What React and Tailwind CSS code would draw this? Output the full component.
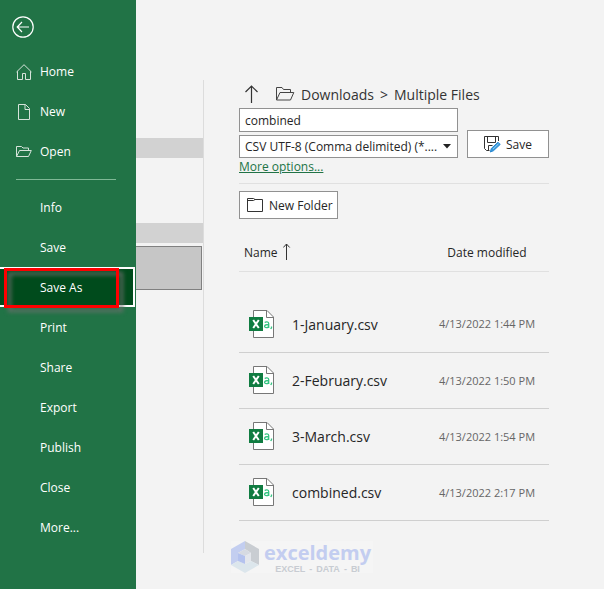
import React from "react";

const topItems = [
  { label: "Home", icon: HomeIcon },
  { label: "New", icon: PageIcon },
  { label: "Open", icon: OpenIcon },
];

const items = ["Info", "Save", "Save As", "Print", "Share", "Export", "Publish", "Close", "More..."];

const files = [
  { name: "1-January.csv", date: "4/13/2022 1:44 PM" },
  { name: "2-February.csv", date: "4/13/2022 1:50 PM" },
  { name: "3-March.csv", date: "4/13/2022 1:54 PM" },
  { name: "combined.csv", date: "4/13/2022 2:17 PM" },
];

function BackIcon() {
  return (
    <svg width="22" height="22" viewBox="0 0 22 22" fill="none" stroke="#fff" aria-hidden="true">
      <circle cx="11" cy="11" r="10.2" strokeWidth="1.2" />
      <path d="M5.5 11H17M10 6l-4.8 5 4.8 5" strokeWidth="1.2" />
    </svg>
  );
}

function HomeIcon() {
  return (
    <svg width="16" height="16" viewBox="0 0 16 16" fill="none" stroke="#d6e3da" aria-hidden="true">
      <path d="M.5 8 8 .7 15.5 8M1.500 7.200V15.500H6.500V9.500H9.500V15.500H14.500V7.200" />
    </svg>
  );
}

function PageIcon() {
  return (
    <svg width="16" height="16" viewBox="0 0 16 16" fill="none" stroke="#d6e3da" aria-hidden="true">
      <path d="M2.500.500H9.500L13.500 4.500V15.500H2.500ZM9 .500V5.500H13.500" />
    </svg>
  );
}

function OpenIcon() {
  return (
    <svg width="16" height="16" viewBox="0 0 16 16" fill="none" stroke="#d6e3da" aria-hidden="true">
      <path d="M.500 12.500V2.500H5.500L7 4H12.500V6.500M.500 12.500 3.500 6.500H15.300L12.500 12.500Z" />
    </svg>
  );
}

function FolderOpenIcon() {
  return (
    <svg width="20" height="16" viewBox="0 0 20 16" fill="none" stroke="#444" aria-hidden="true">
      <path d="M1.500 14V1.500H7L8.500 3.500H15.500V6.500M1.500 14 5 6.500H18.800L15.500 14Z" />
    </svg>
  );
}

function UpArrow() {
  return (
    <svg width="14" height="18" viewBox="0 0 14 18" fill="none" stroke="#333" aria-hidden="true">
      <path d="M6.500 1V18M.5 7 6.500 1l6 6" strokeWidth="1.200" />
    </svg>
  );
}

function SortArrow() {
  return (
    <svg width="8" height="18" viewBox="0 0 8 18" fill="none" stroke="#333" aria-hidden="true">
      <path d="M3.500 1V17M.300 4.500 3.500 1l3.200 3.500" />
    </svg>
  );
}

function NewFolderIcon() {
  return (
    <svg width="16" height="14" viewBox="0 0 16 14" fill="none" stroke="#333" aria-hidden="true">
      <path d="M.500 13.500V.500H6.500L8 1.500H15.500V13.500ZM.500 2.500H6.500L8 1.500" />
    </svg>
  );
}

function SaveIcon() {
  return (
    <svg width="17" height="17" viewBox="0 0 17 17" fill="none" stroke="#333" aria-hidden="true">
      <path d="M5.500 14.500H2.500L.500 12.500V.500H14.500V5M3.500.500V6.500H11.500V.500M4.500 14.500V9.500H8.500" />
      <path d="m6.300 16 1-3.500 6.700-6.300 2.200 2.200-6.700 6.300Z" fill="#3a9bdc" stroke="#2b88d0" />
      <path d="m9 13 5.500-5.200" stroke="#a8d4f2" strokeWidth=".8" />
    </svg>
  );
}

function CsvIcon() {
  return (
    <svg width="26" height="28" viewBox="0 0 26 28" fill="none" aria-hidden="true">
      <path d="M4.500.500H18L24.500 7V27.500H4.500Z" fill="#fff" stroke="#777" />
      <path d="M17.500.500V7.500H24.500" stroke="#777" />
      <rect y="7" width="14" height="14" fill="#107c41" />
      <path d="m4.200 10 5.600 8M9.800 10l-5.600 8" stroke="#fff" strokeWidth="2" />
      <path d="M15.700 12.500c1-.8 4-1 4 1V18M19.700 14.500c-5-.2-5 3.200-2.300 3.200 1.300 0 2.300-.8 2.300-2M22.500 16.500v1.300l-.8 1.200" stroke="#33c481" strokeWidth="1.300" />
    </svg>
  );
}

function Watermark() {
  return (
    <div className="flex h-8 w-[142px] items-center gap-[5px] bg-[#f5f5f5]">
      <svg className="shrink-0" width="28" height="32" viewBox="0 0 28 32" aria-hidden="true">
        <path d="M14 0 0 8V24L7 20V12L14 8Z" fill="#c3cef0" />
        <path d="M14 0 28 8V24L20 20V12L14 8Z" fill="#c9cdd2" />
        <path d="M0 24 14 32 28 24 20 20 14 23 7 20Z" fill="#dce6ec" />
        <path d="m7 12 7-4 6 4-6 3Z" fill="#d6dae2" />
        <path d="M7 12 14 15V23L7 20Z" fill="#b4c2ee" />
        <path d="M20 12 14 15V23L20 20Z" fill="#e3e6ec" />
      </svg>
      <div className="flex flex-col items-center">
        <span className="text-[20px] leading-6 font-bold text-[#c3cdf0]">exceldemy</span>
        <span className="flex gap-1 font-['Liberation_Sans',sans-serif] text-[9px] leading-[8px] font-bold text-[#c8ccd2]">
          <span>EXCEL</span>
          <span>-</span>
          <span>DATA</span>
          <span>-</span>
          <span>BI</span>
        </span>
      </div>
    </div>
  );
}

function Sidebar() {
  return (
    <nav className="w-[136px] shrink-0 bg-[#217346] text-xs text-white">
      <div className="h-[52px] px-3 pt-4">
        <button type="button" aria-label="Back" className="block">
          <BackIcon />
        </button>
      </div>
      {topItems.map(({ label, icon: Icon }) => (
        <button key={label} type="button" className="flex h-10 w-full items-center gap-2 px-4">
          <Icon />
          {label}
        </button>
      ))}
      <hr className="mx-4 my-[7px] w-[100px] border-[#7fb896]" />
      {items.map((label) =>
        label === "Save As" ? (
          <div key={label} className="relative">
            <button
              type="button"
              className="flex h-10 w-[135px] items-center border-y-2 border-r-2 border-white bg-[#004b1c] pt-px pl-10"
            >
              {label}
            </button>
            <div className="pointer-events-none absolute top-px right-[17px] -bottom-px left-1 border-[3px] border-[#fe0000] drop-shadow-[4px_4px_2px_rgba(110,110,110,0.9)]" />
          </div>
        ) : (
          <button key={label} type="button" className="flex h-10 w-full items-center pt-px pl-10">
            {label}
          </button>
        )
      )}
    </nav>
  );
}

function Places() {
  return (
    <div className="mt-20 h-[473px] w-17 shrink-0 border-r border-[#dcdcdc] pt-[58px]">
      <div className="h-5 bg-[#d2d2d2]" />
      <div className="mt-[65px] h-5 bg-[#d2d2d2]" />
      <div className="mt-[3px] mr-px h-11 border border-l-0 border-[#808080] bg-[#c6c6c6]" />
    </div>
  );
}

export default function App() {
  return (
    <div className="flex min-h-screen bg-[#f3f3f3] font-['Open_Sans','Noto_Sans',sans-serif] text-xs text-[#262626]">
      <Sidebar />
      <Places />
      <main className="min-w-0 flex-1 pt-20 pr-[55px] pl-[35px]">
        <div className="flex h-7 items-center text-sm whitespace-nowrap text-[#333]">
          <button type="button" aria-label="Up one level" className="mr-4 ml-1.5">
            <UpArrow />
          </button>
          <FolderOpenIcon />
          <span className="ml-1.5 flex gap-1.5 pt-0.5">
            <span>Downloads</span>
            <span>&gt;</span>
            <span>Multiple Files</span>
          </span>
        </div>
        <div className="flex items-end gap-[9px]">
          <div className="flex min-w-0 flex-1 flex-col gap-[3px]">
            <input
              aria-label="File name"
              defaultValue="combined"
              className="h-6 w-full border border-[#919191] bg-white px-[5px] pt-px"
            />
            <div className="relative">
              <select
                aria-label="File type"
                className="block h-[23px] w-full appearance-none border border-[#919191] bg-white pr-5 pl-[5px]"
              >
                <option>CSV UTF-8 (Comma delimited) (*....</option>
              </select>
              <svg className="pointer-events-none absolute top-[9px] right-[7px]" width="8" height="5" aria-hidden="true">
                <path d="M0 0H8L4 4.500Z" fill="#222" />
              </svg>
            </div>
          </div>
          <button
            type="button"
            className="flex h-7 w-[82px] items-center justify-center gap-[5px] border border-[#919191] bg-white"
          >
            <SaveIcon />
            <span className="pt-0.5">Save</span>
          </button>
        </div>
        <div className="h-[26px] border-b border-[#e0e0e0] pt-px">
          <a href="#options" className="block w-fit text-[#217346] underline">
            More options...
          </a>
        </div>
        <button
          type="button"
          className="mt-[7px] flex h-7 items-center gap-1.5 border border-[#919191] bg-white pr-1 pl-[7px]"
        >
          <NewFolderIcon />
          <span className="pt-0.5">New Folder</span>
        </button>
        <table className="mt-3.5 w-full border-collapse">
          <thead>
            <tr className="h-[38px] border-b border-[#e0e0e0]">
              <th className="p-0 pl-[5px] text-left font-normal">
                <span className="flex items-center gap-[5px]">
                  <span className="pt-0.5">Name</span>
                  <SortArrow />
                </span>
              </th>
              <th className="w-[124px] p-0 pt-0.5 text-center font-normal">Date modified</th>
            </tr>
          </thead>
          <tbody>
            <tr aria-hidden="true">
              <td colSpan={2} className="h-[25px] p-0" />
            </tr>
            {files.map((file) => (
              <tr key={file.name} className="h-14 border-b border-[#cfcfcf]">
                <td className="p-0 pl-2.5 text-sm">
                  <span className="flex items-center gap-[17px]">
                    <CsvIcon />
                    <span className="pt-0.5">{file.name}</span>
                  </span>
                </td>
                <td className="p-0 pt-0.5 text-center text-[11px] whitespace-nowrap text-[#666]">{file.date}</td>
              </tr>
            ))}
          </tbody>
        </table>
        <div className="mt-5 -ml-2">
          <Watermark />
        </div>
      </main>
    </div>
  );
}
